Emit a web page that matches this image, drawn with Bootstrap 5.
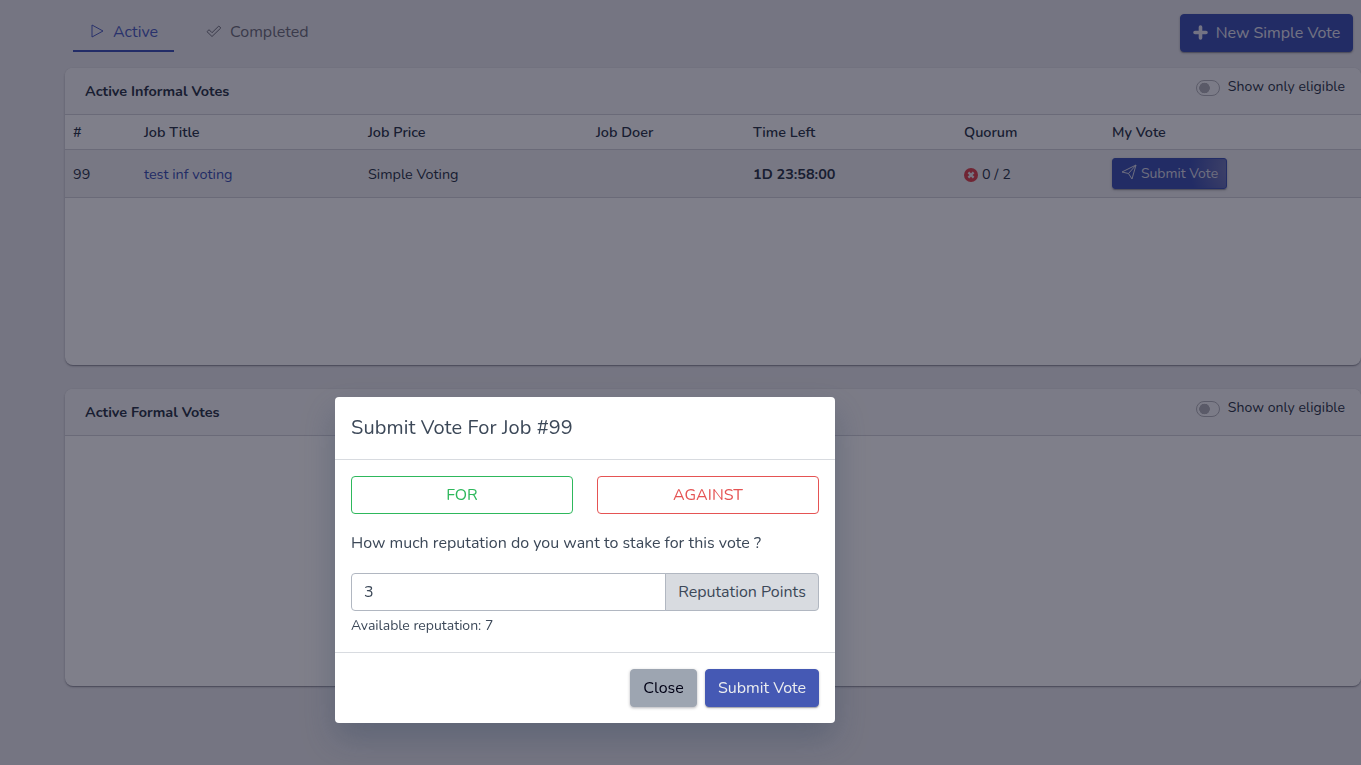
<!DOCTYPE html>
<html lang="en">
<head>
<meta charset="utf-8">
<meta name="viewport" content="width=device-width, initial-scale=1">
<title>Votes</title>
<link href="https://cdn.jsdelivr.net/npm/bootstrap@5.3.0/dist/css/bootstrap.min.css" rel="stylesheet">
<style>
body{font-family:Nunito,Lato,"Open Sans",sans-serif;background:#ebebef;color:#323c4d;overflow:hidden;height:765px}
.page{padding:14px 0 0 65px}
.toolbar{height:38px;padding:0 8px;margin-bottom:16px}
.vote-tabs{gap:16px}
.vote-tabs .nav-link{height:38px;padding:0 16px 0 16px;display:flex;align-items:center;border-bottom:2px solid transparent;border-radius:0;color:#75757f}
.vote-tabs .nav-link.active{color:#5264c2;border-color:#4458b8;background:none}
.vote-tabs svg{margin:-2px 8px 0 0}
.btn{border-radius:4px}
.btn-main{background:#4559b4;border-color:#4559b4;color:#fff;box-shadow:0 1px 1px rgba(0,0,21,.14),0 2px 1px -1px rgba(0,0,21,.12),0 1px 3px rgba(0,0,21,.2)}
.btn-new{width:173px;height:38px;padding:0;color:#e6e6f0}
.btn-new svg{margin-top:-2px}
.vote-card{height:297px;margin-bottom:24px;border:0;border-radius:8px;background:#fff;box-shadow:0 1px 1px rgba(0,0,21,.14),0 2px 1px -1px rgba(0,0,21,.12),0 1px 3px rgba(0,0,21,.2);overflow:hidden}
.vote-card .card-header{height:47px;padding:0 16px 0 20px;background:#f7f7f8;border-color:#d4d4da;font-size:14px}
.vote-title{font-weight:700;font-size:14.4px;padding-top:2px}
.eligible{padding:8px 0 0;gap:8px;min-height:0;margin:0;line-height:21px;letter-spacing:.06px}
.eligible .form-check-input{width:24px;height:16px;margin:4px 0 0;float:none;background-color:transparent;border:1px solid #b7b7bd;
background-image:radial-gradient(circle at 7.5px 7px,#b5b5bb 5px,transparent 5.6px)}
.vote-table{table-layout:fixed;font-size:14.4px;margin:0;--bs-table-color:#323c4d;--bs-table-bg:transparent;border-color:#d4d4da}
.vote-table>:not(caption)>*>*{color:#323c4d;padding:4px 8px 0;vertical-align:middle}
.vote-table th{font-weight:600;height:34px;padding-top:3px}
.vote-table td{height:48px}
.vote-table tbody tr{background:#f0f0f2}
.vote-table a{color:#4458b5;text-decoration:none}
.vote-table .time{font-weight:700}
.btn-vote{width:115px;height:31px;padding:0;margin-top:-3px;font-size:14px;color:#dcdce8;border-radius:3px;background:radial-gradient(circle at 125px 10px,#777fb9 12px,#6671b7 25px,#4559b4 48px)}
.btn-vote svg{margin-top:-3px}
.modal-backdrop{--bs-backdrop-bg:#000015}
.vote-modal{overflow:hidden}
.vote-modal .modal-dialog{width:500px;margin:397px 0 0 335px}
.vote-modal .modal-content{height:326px;border:0;border-radius:4px;color:#3c4858;box-shadow:0 16px 32px rgba(60,75,100,.4)}
.vote-modal .modal-header{height:63px;padding:0 16px 1px;border-color:#d8dbe0}
.vote-modal .modal-title{font-size:20px;font-weight:400;letter-spacing:.09px}
.vote-modal .modal-body{padding:16px}
.choice{height:38px;padding:0}
.btn-for{color:#2eb85c;border-color:#2eb85c}
.btn-against{color:#e55353;border-color:#e55353}
.question{margin:17px 0 18px;line-height:24px}
.stake{height:38px}
.stake .form-control,.stake .input-group-text{border-color:#b1b7c1;color:#3c4858;border-radius:4px;padding:0 12px}
.stake .form-control{border-radius:4px 0 0 4px}
.stake .input-group-text{width:154px;justify-content:center;background:#d8dbe0;border-radius:0 4px 4px 0}
.available{font-size:14px;line-height:21px;margin-top:4px}
.vote-modal .modal-footer{height:71px;padding:0 16px;gap:8px;border-color:#d8dbe0}
.vote-modal .modal-footer .btn{height:38px;margin:0;padding:0}
.btn-close-vote{width:67px;background:#9da5b1;border-color:#9da5b1;color:#000015;box-shadow:0 1px 3px rgba(0,0,21,.3)}
.btn-send{width:114px;color:#ebedef}
</style>
<script src="https://cdn.jsdelivr.net/npm/bootstrap@5.3.0/dist/js/bootstrap.bundle.min.js"></script>
</head>
<body>
<main class="page">
  <div class="toolbar d-flex justify-content-between">
    <nav class="nav vote-tabs">
      <a class="nav-link active" href="#"><svg width="16" height="16" viewBox="0 0 16 16" fill="none" stroke="currentColor"><path d="M3 2v12L14 8z" stroke-linejoin="round"/></svg><span>Active</span></a>
      <a class="nav-link" href="#"><svg width="16" height="16" viewBox="0 0 16 16" fill="none" stroke="currentColor" stroke-linejoin="round"><path d="M1 8.7l2-2 3 3 6.8-6.7 2 2L6 13.5z"/></svg><span>Completed</span></a>
    </nav>
    <button class="btn btn-main btn-new d-flex align-items-center justify-content-center gap-2"><svg width="15" height="15" viewBox="0 0 15 15"><path d="M7.5 2v11M2 7.5h11" stroke="currentColor" stroke-width="3.6" stroke-linecap="round"/></svg><span>New Simple Vote</span></button>
  </div>
  <section class="card vote-card">
    <div class="card-header d-flex justify-content-between">
      <span class="vote-title align-self-center">Active Informal Votes</span>
      <label class="eligible form-check form-switch d-flex"><input class="form-check-input" type="checkbox"><span>Show only eligible</span></label>
    </div>
    <table class="table vote-table">
      <colgroup><col style="width:71px"><col style="width:224px"><col style="width:228px"><col style="width:157px"><col style="width:211px"><col style="width:148px"><col style="width:257px"></colgroup>
      <thead><tr><th>#</th><th>Job Title</th><th>Job Price</th><th>Job Doer</th><th>Time Left</th><th>Quorum</th><th>My Vote</th></tr></thead>
      <tbody><tr><td>99</td><td><a href="#">test inf voting</a></td><td>Simple Voting</td><td></td><td class="time">1D 23:58:00</td>
        <td><div class="d-flex align-items-center gap-1"><svg width="14" height="14" viewBox="0 0 14 14"><circle cx="7" cy="7" r="7" fill="#e04b52"/><path d="M4.4 4.4l5.2 5.2m0-5.2L4.4 9.6" stroke="#ededf0" stroke-width="2.2"/></svg><span>0 / 2</span></div></td>
        <td><button class="btn btn-main btn-vote d-flex align-items-center justify-content-center gap-1"><svg width="16" height="16" viewBox="0 0 16 16" fill="none" stroke="currentColor" stroke-linejoin="round"><path d="M1 8L15 1l-4 14-3.5-5.5zM15 1L7.5 9.5"/></svg><span>Submit Vote</span></button></td></tr></tbody>
    </table>
  </section>
  <section class="card vote-card">
    <div class="card-header d-flex justify-content-between">
      <span class="vote-title align-self-center">Active Formal Votes</span>
      <label class="eligible form-check form-switch d-flex"><input class="form-check-input" type="checkbox"><span>Show only eligible</span></label>
    </div>
  </section>
</main>
<div class="modal-backdrop show"></div>
<div class="modal show d-block vote-modal" role="dialog">
  <div class="modal-dialog"><div class="modal-content">
    <div class="modal-header"><h5 class="modal-title">Submit Vote For Job #99</h5></div>
    <div class="modal-body">
      <div class="row">
        <div class="col-6"><button class="btn choice btn-for w-100">FOR</button></div>
        <div class="col-6"><button class="btn choice btn-against w-100">AGAINST</button></div>
      </div>
      <p class="question">How much reputation do you want to stake for this vote ?</p>
      <div class="input-group stake"><input class="form-control" value="3" aria-label="Stake"><span class="input-group-text">Reputation Points</span></div>
      <div class="available">Available reputation: 7</div>
    </div>
    <div class="modal-footer"><button class="btn btn-close-vote">Close</button><button class="btn btn-main btn-send">Submit Vote</button></div>
  </div></div>
</div>
</body>
</html>
